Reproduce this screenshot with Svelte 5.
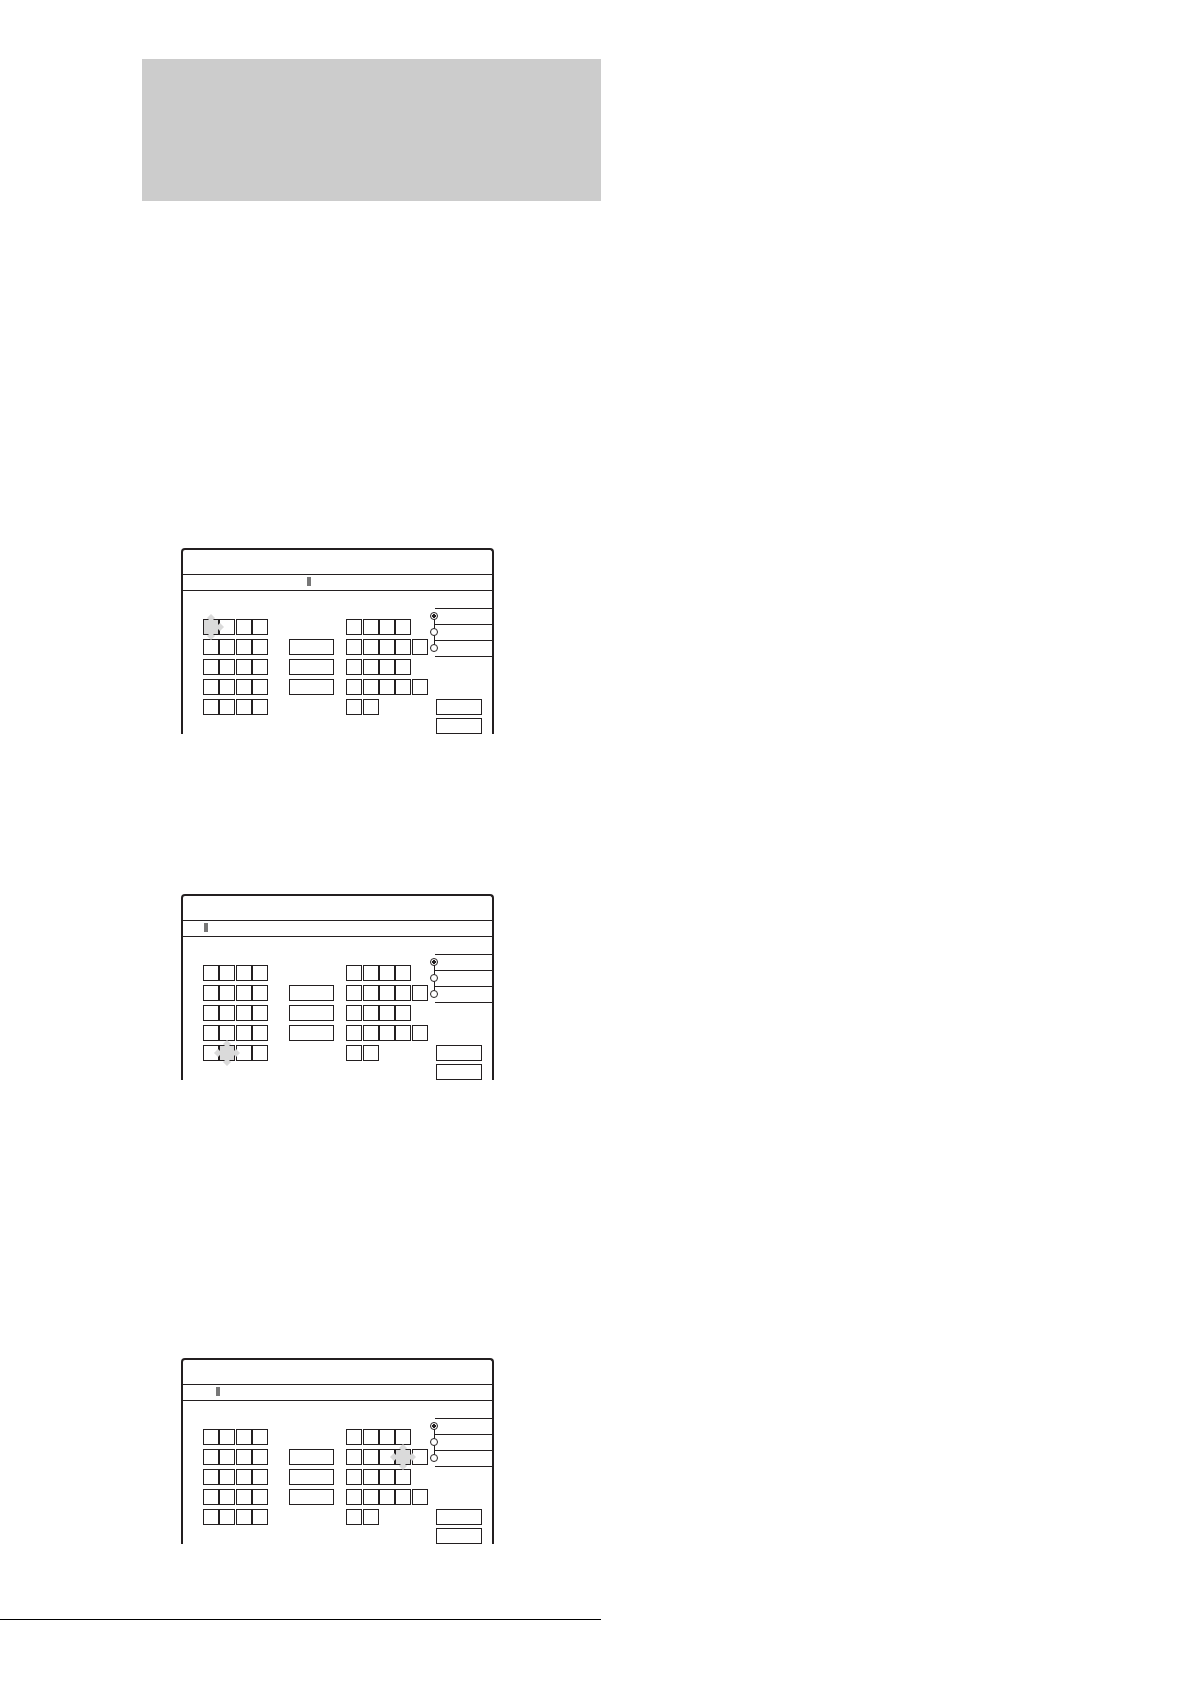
<script>
  const leftRows = [4, 4, 4, 4, 4]
  const rightRows = [4, 5, 4, 5, 2]
  const tracks = ['Track 1', 'Track 2', 'Track 3']
  const modes = ['Mode 1', 'Mode 2', 'Mode 3']
  const actions = ['Action 1', 'Action 2']

  // cursor: distance of the marker from the left edge of the message line
  // active: the blinking cell and the arrow keys around it
  const screens = [
    { id: 'first', cursor: 124, active: { side: 'left', row: 0, cell: 0, edge: true } },
    { id: 'second', cursor: 21, active: { side: 'left', row: 4, cell: 1 } },
    { id: 'third', cursor: 33, active: { side: 'right', row: 1, cell: 3 } }
  ]

  function isActive(screen, side, row, cell) {
    const a = screen.active
    return a.side === side && a.row === row && a.cell === cell
  }
</script>

{#snippet cells(screen, side, rows)}
  <div class="cells {side}">
    {#each rows as count, row}
      <div class="row">
        {#each Array(count) as _, cell}
          <span class="cell">
            <input type="text" maxlength="1" aria-label="{side} row {row + 1}, position {cell + 1}" />
            {#if isActive(screen, side, row, cell)}
              <svg class="blink" width="28" height="28" viewBox="0 0 28 28" aria-hidden="true">
                <rect x="7" y="7" width="14" height="14" />
                <path d="M14 1L18 5L16 7V8H12V7L10 5Z" />
                <path d="M14 27L18 23L16 21V20H12V21L10 23Z" />
                <path d="M27 14L23 18L21 16H20V12H21L23 10Z" />
                {#if !screen.active.edge}
                  <path d="M1 14L5 18L7 16H8V12H7L5 10Z" />
                {/if}
              </svg>
            {/if}
          </span>
        {/each}
      </div>
    {/each}
  </div>
{/snippet}

<main class="page">
  <div class="banner"></div>

  {#each screens as screen}
    <section class="screen {screen.id}">
      <header class="title"></header>
      <div class="message" style="padding-left: {screen.cursor}px">
        <span class="cursor"></span>
      </div>
      <div class="body">
        {@render cells(screen, 'left', leftRows)}
        <div class="tracks">
          {#each tracks as track}
            <button type="button" class="box" aria-label={track}></button>
          {/each}
        </div>
        {@render cells(screen, 'right', rightRows)}
        <div class="side">
          <div class="modes">
            {#each modes as mode, i}
              <label class="mode">
                <input type="radio" name="mode-{screen.id}" aria-label={mode} checked={i === 0} />
              </label>
            {/each}
          </div>
          <div class="actions">
            {#each actions as action}
              <button type="button" class="box" aria-label={action}></button>
            {/each}
          </div>
        </div>
      </div>
    </section>
  {/each}

  <hr />
</main>

<style>
  :global(body) {
    margin: 0;
    background: #fff;
  }

  .page {
    --line: #231f20;
    width: 50.5%;
    padding: 59px 0 62px;
  }

  .page :global(*) {
    box-sizing: border-box;
  }

  .banner {
    height: 142px;
    margin-left: 142px;
    background: #ccc;
  }

  .screen {
    margin: 160px 107px 0 181px;
    border: 2px solid var(--line);
    border-bottom: 0;
    border-radius: 4px 4px 0 0;
  }

  .first {
    margin-top: 347px;
  }

  .third {
    margin-top: 278px;
  }

  .title {
    height: 25px;
    border-bottom: 1px solid var(--line);
  }

  .message {
    display: flex;
    align-items: center;
    height: 16px;
    padding-bottom: 2px;
    border-bottom: 1px solid var(--line);
  }

  .cursor {
    width: 4px;
    height: 9px;
    background: #777;
  }

  .body {
    display: flex;
    height: 143px;
    padding-left: 20px;
  }

  .cells,
  .tracks {
    display: flex;
    flex-direction: column;
    gap: 4px;
    padding-top: 28px;
  }

  .row {
    display: flex;
  }

  .cell {
    position: relative;
    width: 16px;
    height: 16px;
  }

  .cell input {
    display: block;
    width: 16px;
    height: 16px;
    margin: 0;
    padding: 0;
    border: 1px solid var(--line);
    border-radius: 0;
    background: #fff;
    font: 12px "Liberation Sans", sans-serif;
    text-align: center;
  }

  .left .cell:nth-child(3),
  .right .cell:nth-child(2),
  .right .cell:nth-child(5) {
    margin-left: 1px;
  }

  .blink {
    position: absolute;
    top: -6px;
    left: -6px;
    z-index: 1;
    fill: #dadada;
    pointer-events: none;
  }

  .box {
    display: block;
    height: 16px;
    padding: 0;
    border: 1px solid var(--line);
    border-radius: 0;
    background: #fff;
  }

  .tracks {
    padding-top: 48px;
    margin: 0 12px 0 21px;
  }

  .tracks .box {
    width: 45px;
  }

  .side {
    display: flex;
    flex: 1;
    flex-direction: column;
    justify-content: space-between;
    padding-top: 17px;
  }

  .right {
    width: 82px;
    margin-right: 7px;
  }

  .modes {
    position: relative;
    border-top: 1px solid var(--line);
  }

  .modes::before {
    content: "";
    position: absolute;
    top: 8px;
    bottom: 8px;
    left: -1px;
    width: 1px;
    background: var(--line);
  }

  .mode {
    display: flex;
    align-items: center;
    height: 16px;
    padding-bottom: 2px;
    border-bottom: 1px solid var(--line);
  }

  .mode input {
    appearance: none;
    position: relative;
    width: 8px;
    height: 8px;
    margin: 0 0 0 -5px;
    border: 1px solid var(--line);
    border-radius: 50%;
    background: #fff;
  }

  .mode input:checked {
    background: radial-gradient(circle, var(--line) 2px, #fff 2px);
  }

  .actions {
    display: flex;
    flex-direction: column;
    gap: 3px;
    padding-left: 1px;
  }

  .actions .box {
    width: 46px;
  }

  hr {
    height: 1px;
    margin: 75px 0 0;
    border: 0;
    background: #000;
  }
</style>
